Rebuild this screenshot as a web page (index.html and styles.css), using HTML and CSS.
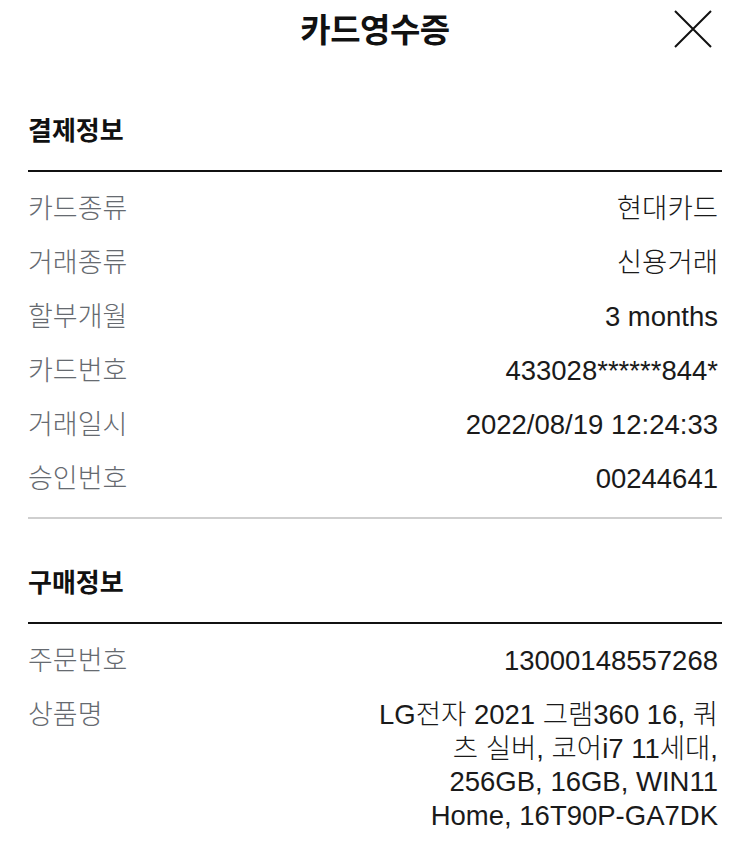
FILE: index.html
```html
<!DOCTYPE html>
<html lang="ko">
<head>
  <meta charset="UTF-8">
  <meta name="viewport" content="width=device-width, initial-scale=1.0">
  <title>카드영수증</title>
  <link rel="stylesheet" href="styles.css">
</head>
<body>
  <div class="header">
    <div class="title">카드영수증</div>
    <a href="#" class="close" aria-label="닫기">
      <svg width="38" height="38" viewBox="0 0 38 38">
        <path d="M1 1 L37 37 M37 1 L1 37" stroke="#111" stroke-width="2" fill="none"/>
      </svg>
    </a>
  </div>

  <div class="section">
    <div class="section-title">결제정보</div>
    <div class="rows">
      <div class="row"><span class="label">카드종류</span><span class="value">현대카드</span></div>
      <div class="row"><span class="label">거래종류</span><span class="value">신용거래</span></div>
      <div class="row"><span class="label">할부개월</span><span class="value">3 months</span></div>
      <div class="row"><span class="label">카드번호</span><span class="value">433028******844*</span></div>
      <div class="row"><span class="label">거래일시</span><span class="value">2022/08/19 12:24:33</span></div>
      <div class="row"><span class="label">승인번호</span><span class="value">00244641</span></div>
    </div>
  </div>

  <div class="section last">
    <div class="section-title">구매정보</div>
    <div class="rows">
      <div class="row"><span class="label">주문번호</span><span class="value">13000148557268</span></div>
      <div class="row">
        <span class="label">상품명</span>
        <span class="value multi">
          <span class="line">LG전자 2021 그램360 16, 쿼</span>
          <span class="line">츠 실버, 코어i7 11세대,</span>
          <span class="line">256GB, 16GB, WIN11</span>
          <span class="line">Home, 16T90P-GA7DK</span>
        </span>
      </div>
    </div>
  </div>
</body>
</html>
```

FILE: styles.css
```css
body {
  margin: 0;
  padding: 0;
  background-color: #fff;
  color: #111;
  font-family: "Liberation Sans", "Noto Sans CJK KR", sans-serif;
}

.header {
  position: relative;
  height: 58px;
  display: flex;
  justify-content: center;
  align-items: center;
}

.title {
  font-size: 33px;
  font-weight: bold;
  letter-spacing: -0.5px;
  margin-top: -2px;
}

.close {
  position: absolute;
  top: 10px;
  right: 38px;
  display: block;
  width: 38px;
  height: 38px;
}

.section {
  margin: 0 28px;
  border-bottom: 2px solid #cfcfcf;
  padding-top: 58px;
}

.section + .section {
  padding-top: 49px;
}

.section.last {
  border-bottom: none;
}

.section-title {
  font-size: 26px;
  font-weight: bold;
  line-height: 30px;
  padding-bottom: 24px;
  border-bottom: 2px solid #111;
}

.rows {
  padding: 10px 4px 11px 0;
}

.row {
  display: flex;
  justify-content: space-between;
  align-items: flex-start;
  line-height: 54px;
  font-size: 27.5px;
  font-weight: 300;
}

.label {
  color: #666a70;
  font-size: 27px;
  flex-shrink: 0;
}

.value {
  color: #1a1a1a;
  text-align: right;
}

.value.multi {
  display: flex;
  flex-direction: column;
  align-items: flex-end;
  padding-top: 10px;
}

.line {
  display: block;
  height: 33.5px;
  line-height: 33.5px;
  white-space: nowrap;
}
```
